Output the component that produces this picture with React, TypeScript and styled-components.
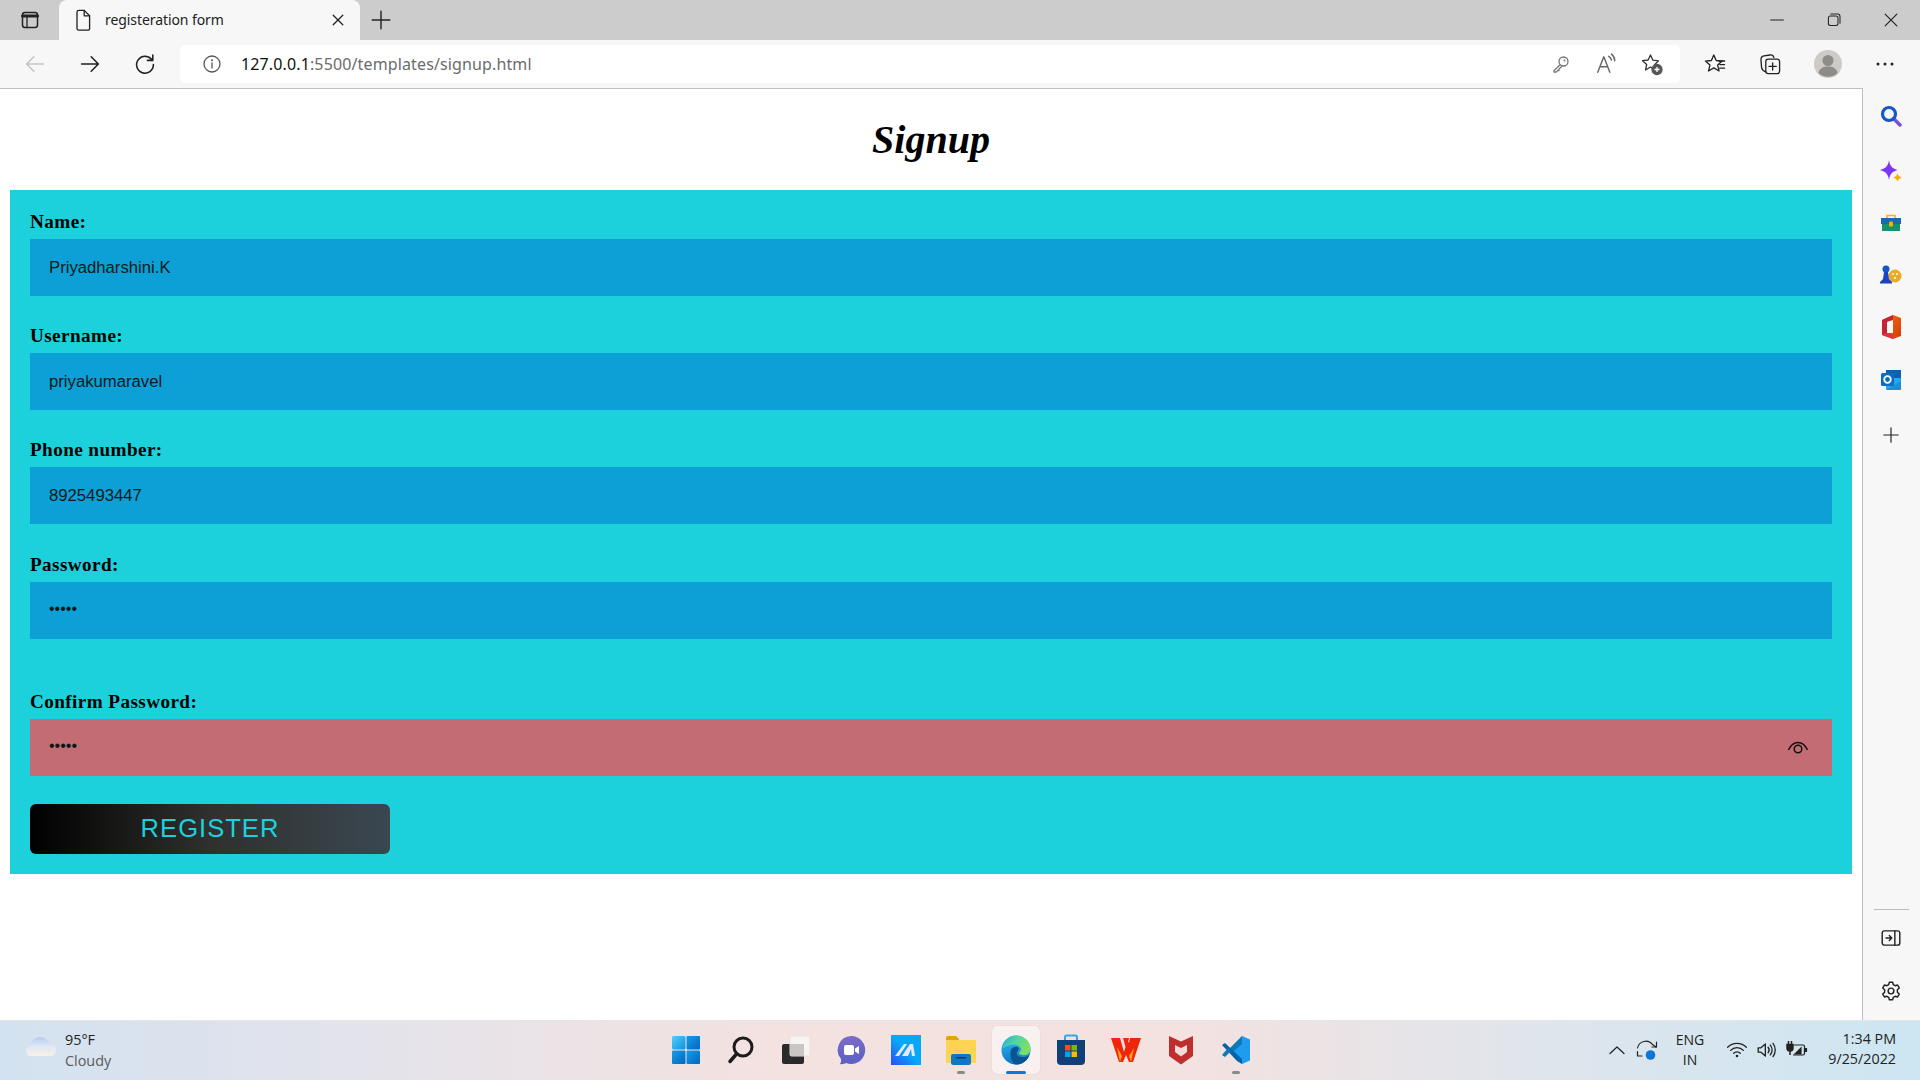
import React from "react";
import styled, { createGlobalStyle } from "styled-components";

const Global = createGlobalStyle`
  html, body { margin: 0; padding: 0; background: #fff; overflow: hidden; }
  * { box-sizing: border-box; }
`;

const uiFont = `"Open Sans", "Noto Sans", sans-serif`;

const Screen = styled.div`
  width: 1920px; height: 1080px; display: flex; flex-direction: column;
  font-family: ${uiFont}; color: #1a1a1a; overflow: hidden;
`;
const TabStrip = styled.div`
  height: 40px; flex: none; background: #cccccc; display: flex; align-items: stretch;
`;
const StripSlot = styled.div<{ $w: number }>`
  width: ${(p) => p.$w}px; flex: none; display: flex; align-items: center; justify-content: center;
`;
const Tab = styled.div`
  width: 301px; flex: none; background: #f7f7f7; border-radius: 8px 8px 0 0;
  display: flex; align-items: center; padding-left: 12px;
`;
const TabTitle = styled.span`
  font-size: 14px; margin-left: 10px; flex: 1; color: #222; font-family: "Noto Sans", sans-serif; letter-spacing: -0.08px; padding-bottom: 2px;
`;
const TabClose = styled.div`
  width: 44px; display: flex; justify-content: center;
`;
const Spacer = styled.div`flex: 1;`;
const Toolbar = styled.div`
  height: 48px; flex: none; background: #f7f7f7; display: flex; align-items: center; padding-left: 7px;
`;
const ToolButton = styled.div<{ $w?: number }>`
  width: ${(p) => p.$w ?? 55}px; height: 38px; flex: none; display: flex; align-items: center; justify-content: center;
`;
const AddressBar = styled.div`
  width: 1500px; height: 38px; flex: none; margin: 0 7px 0 8px; background: #fff; border-radius: 5px;
  display: flex; align-items: center; padding: 0 5px 0 22px;
`;
const Url = styled.div`
  margin-left: 19px; flex: 1; font-size: 16px; color: #6b6b6b; font-family: "Noto Sans", sans-serif; letter-spacing: 0.13px;
`;
const UrlHost = styled.span`color: #111;`;
const Middle = styled.div`flex: 1; display: flex; min-height: 0;`;
const Page = styled.main`
  width: 1863px; flex: none; background: #fff; border-top: 1px solid #bdbdbd; border-right: 1px solid #bdbdbd;
  padding: 0 10px;
`;
const Title = styled.h1`
  height: 101px; margin: 0; display: flex; align-items: center; justify-content: center;
  font: italic bold 40px "Liberation Serif", serif; color: #000;
`;
const Panel = styled.form`
  background: #1cd1dc; padding: 19px 20px 20px; height: 684px;
`;
const Field = styled.div<{ $gap: number }>`
  position: relative; margin-bottom: ${(p) => p.$gap}px;
`;
const Label = styled.label`
  display: block; height: 30px; font: bold 19.2px/25px "Liberation Serif", serif; color: #000; letter-spacing: 0.4px;
`;
const Input = styled.input<{ $bad?: boolean }>`
  display: block; width: 100%; height: 57px; border: none; outline: none;
  padding: ${(p) => (p.type === "password" ? "0 19px 3px" : "0 19px")};
  background: ${(p) => (p.$bad ? "#c46c74" : "#0ca0d6")}; color: #0a1a1a;
  font: ${(p) => (p.type === "password" ? 16 : 16.7)}px "Liberation Sans", Arial, sans-serif;
`;
const Eye = styled.svg`
  position: absolute; right: 22px; bottom: 20px; width: 24px; height: 18px;
`;
const Register = styled.button`
  display: block; width: 360px; height: 50px; border: none; border-radius: 6px; padding: 0 0 2px;
  background: linear-gradient(90deg, #000 0%, #30302e 50%, #3a4750 100%);
  color: #1cd1dc; font: 25.6px "Liberation Sans", Arial, sans-serif; letter-spacing: 1px;
`;
const Sidebar = styled.aside`
  flex: 1; background: #f7f7f7; display: flex; flex-direction: column;
`;
const SideSlot = styled.div<{ $h?: number }>`
  height: ${(p) => p.$h ?? 53}px; flex: none; display: flex; align-items: center; justify-content: center; padding-right: 2px;
`;
const SideRule = styled.div`
  margin: auto 11px 1px 11px; height: 1px; background: #bdbdbd;
`;
const SideEnd = styled.div`height: 3px; flex: none;`;
const Taskbar = styled.footer`
  height: 60px; flex: none; display: grid; grid-template-columns: 1fr auto 1fr; align-items: center;
  background: linear-gradient(90deg, #d3e2f0 0%, #e6e3ea 22%, #f3e2e0 40%, #f3e2e0 62%, #dfe5ec 80%, #cde6f2 100%);
  border-top: 1px solid #e6e6e6; padding-bottom: 1px;
`;
const Weather = styled.div`
  display: flex; align-items: center; padding-left: 25px;
`;
const WeatherIcon = styled.svg`
  margin-top: -6px; flex: none;
`;
const WeatherText = styled.div`
  margin-left: 8px; font-size: 14.4px; line-height: 21px; color: #222;
`;
const Muted = styled.div`color: #5a5a5a;`;
const TaskIcons = styled.div`display: flex; align-items: center; padding-left: 2px;`;
const TaskSlot = styled.div<{ $active?: boolean }>`
  position: relative; width: 55px; height: 48px; display: flex; align-items: center; justify-content: center;
  &::before {
    content: "";
    position: absolute; inset: 0 3.5px;
    border-radius: 5px;
    ${(p) => (p.$active ? "background: #f9f1f0; box-shadow: 0 0 1px rgba(0,0,0,.2);" : "")}
  }
  & > svg { position: relative; }
`;
const RunDot = styled.div<{ $active?: boolean }>`
  position: absolute; bottom: 0; left: 50%; transform: translateX(-50%);
  width: ${(p) => (p.$active ? 20 : 8)}px; height: 3px; border-radius: 2px;
  background: ${(p) => (p.$active ? "#0a78d4" : "#8a8a8a")};
`;
const Tray = styled.div`
  display: flex; align-items: center; justify-content: flex-end; padding-right: 24px;
`;
const TraySlot = styled.div`
  width: 30px; display: flex; justify-content: center; align-items: center;
`;
const Lang = styled.div`
  width: 56px; margin-right: 4px; text-align: center; font-size: 14px; line-height: 20px; color: #222;
`;
const Clock = styled.div`
  width: 84px; text-align: right; font-size: 14.3px; line-height: 20px; color: #222; white-space: nowrap; margin-top: -2px;
`;

type S = { s?: number; children: React.ReactNode; sw?: number; c?: string };
const Ic = ({ s = 20, children, sw = 1.3, c = "#222" }: S) => (
  <svg width={s} height={s} viewBox="0 0 20 20" fill="none" stroke={c} strokeWidth={sw} strokeLinecap="round" strokeLinejoin="round">
    {children}
  </svg>
);
const star = "M9 2.5l2 4.6 5 .5-3.8 3.3 1.2 4.9L9 13.2l-4.4 2.6 1.2-4.9L2 7.6l5-.5z";

const fields = [
  { label: "Name:", value: "Priyadharshini.K", type: "text", gap: 27 },
  { label: "Username:", value: "priyakumaravel", type: "text", gap: 27 },
  { label: "Phone number:", value: "8925493447", type: "text", gap: 28 },
  { label: "Password:", value: "12345", type: "password", gap: 50 },
];

const G = ({ id, stops, x2 = 1, y2 = 1 }: { id: string; stops: string[]; x2?: number; y2?: number }) => (
  <linearGradient id={id} x1="0" y1="0" x2={x2} y2={y2}>
    {stops.map((c, i) => <stop key={c + i} offset={i / (stops.length - 1)} stopColor={c} />)}
  </linearGradient>
);

export default function App() {
  return (
    <Screen>
      <Global />
      <TabStrip>
        <StripSlot $w={59}>
          <Ic s={20}><rect x="2.5" y="2.5" width="15" height="15" rx="2.5" strokeWidth="1.5" /><path d="M2.5 6h15" strokeWidth="3" /><path d="M7 6v11.5" /></Ic>
        </StripSlot>
        <Tab>
          <Ic s={24} sw={1.1}><path d="M5 3.5a1.5 1.5 0 0 1 1.5-1.5H11l4.5 4.5V17a1.5 1.5 0 0 1-1.5 1.5H6.500A1.500 1.500 0 0 1 5 17z" /><path d="M11 2v4.500h4.500" /></Ic>
          <TabTitle>registeration form</TabTitle>
          <TabClose><Ic s={16} sw={1.6}><path d="M4 4l12 12M16 4L4 16" /></Ic></TabClose>
        </Tab>
        <StripSlot $w={42}>
          <Ic s={22}><path d="M10 2v16M2 10h16" /></Ic>
        </StripSlot>
        <Spacer />
        <StripSlot $w={56}><Ic s={18}><path d="M3 10h14" /></Ic></StripSlot>
        <StripSlot $w={57}><Ic s={16}><rect x="3" y="5" width="12" height="12" rx="2.500" /><path d="M6 2.500h8.500A3 3 0 0 1 17.500 5.500V14" /></Ic></StripSlot>
        <StripSlot $w={58}><Ic s={18}><path d="M3.500 3.500l13 13M16.500 3.500l-13 13" /></Ic></StripSlot>
      </TabStrip>
      <Toolbar>
        <ToolButton><Ic s={24} c="#c4c4c4"><path d="M17 10H3M9 4l-6 6 6 6" /></Ic></ToolButton>
        <ToolButton><Ic s={24}><path d="M3 10h14M11 4l6 6-6 6" /></Ic></ToolButton>
        <ToolButton><Ic s={24}><path d="M16 7a7 7 0 1 0 1 3.500" /><path d="M16.500 2.500V7H12" /></Ic></ToolButton>
        <AddressBar>
          <Ic s={20} c="#555"><circle cx="10" cy="10" r="8" /><path d="M10 9v5" /><circle cx="10" cy="6.200" r=".4" /></Ic>
          <Url><UrlHost>127.0.0.1</UrlHost>:5500/templates/signup.html</Url>
          <ToolButton $w={45}><Ic s={20} c="#777"><circle cx="12.500" cy="7.500" r="4.500" /><path d="M9.200 10.800L3 16.500V18h2.500l1-1.500H8v-1.500l2.500-2.200" /><circle cx="13.500" cy="6.500" r=".4" /></Ic></ToolButton>
          <ToolButton $w={46}><Ic s={22} c="#666"><path d="M2.500 17.500L8 3.500l5.500 14M4.500 12.500h7" /><path d="M12.500 3a5 5 0 0 1 2.500 3.500M15 1a8 8 0 0 1 3 6" /></Ic></ToolButton>
          <ToolButton $w={46}>
            <svg width="24" height="24" viewBox="0 0 24 24" fill="none" stroke="#333" strokeWidth="1.300" strokeLinejoin="round">
              <path d="M10.500 3l2.400 5.200 5.600.7-4 3.800 1 3.800-1.500.5-3.500-2-5 3 1.200-5.500-4.200-3.800 5.600-.7z" />
              <circle cx="17" cy="17.500" r="5" fill="#555" stroke="#555" />
              <path d="M17 15v5M14.500 17.500h5" stroke="#fff" />
            </svg>
          </ToolButton>
        </AddressBar>
        <ToolButton $w={55}>
          <Ic s={24} sw={1.1}><path d={star} /><path d="M13 7.500h5M14 10.500h4M14 13.500h4" /></Ic>
        </ToolButton>
        <ToolButton $w={56}>
          <Ic s={24} sw={1.1}><path d="M6.500 16.500c-2-.5-3-1.500-3.500-3.500L2.500 7C2.300 5 3 3.500 5 3.200L10 2.500c1.500-.2 2.800.5 3.200 2" /><rect x="6.500" y="6" width="11.500" height="12" rx="2" /><path d="M12.200 9v6M9.200 12h6" /></Ic>
        </ToolButton>
        <ToolButton $w={60}>
          <svg width="28" height="28" viewBox="0 0 28 28"><circle cx="14" cy="14" r="14" fill="#cdcbc8" /><circle cx="14" cy="10.500" r="5.500" fill="#8f8b87" /><path d="M4.500 23c1-5 5-6.500 9.500-6.500S22.500 18 23.500 23A14 14 0 0 1 4.500 23z" fill="#8f8b87" /></svg>
        </ToolButton>
        <ToolButton $w={54}>
          <svg width="18" height="4" viewBox="0 0 18 4" fill="#222"><circle cx="2" cy="2" r="1.500" /><circle cx="9" cy="2" r="1.500" /><circle cx="16" cy="2" r="1.500" /></svg>
        </ToolButton>
      </Toolbar>
      <Middle>
        <Page>
          <Title>Signup</Title>
          <Panel onSubmit={(e) => e.preventDefault()}>
            {fields.map((f) => (
              <Field key={f.label} $gap={f.gap}>
                <Label>{f.label}</Label>
                <Input type={f.type} defaultValue={f.value} readOnly />
              </Field>
            ))}
            <Field $gap={28}>
              <Label>Confirm Password:</Label>
              <Input type="password" defaultValue="12345" readOnly $bad />
              <Eye viewBox="0 0 24 18" fill="none" stroke="#111" strokeWidth="1.500">
                <path d="M2.500 12C5 6.500 8 4.500 12 4.500S19 6.500 21.500 12" />
                <circle cx="12" cy="11" r="3.800" />
              </Eye>
            </Field>
            <Register type="button">REGISTER</Register>
          </Panel>
        </Page>
        <Sidebar>
          <SideSlot $h={55}>
            <svg width="22" height="22" viewBox="0 0 22 22" fill="none"><path d="M13.500 13.500L20 20" stroke="#7b4fd6" strokeWidth="3.500" strokeLinecap="round" /><circle cx="9" cy="9" r="6.500" stroke="#1658c8" strokeWidth="3.200" /></svg>
          </SideSlot>
          <SideSlot $h={58}>
            <svg width="24" height="24" viewBox="0 0 24 24"><path d="M10 0c.8 5.500 3 8.500 8.500 10-5.500 1.500-7.700 4.500-8.500 10-.8-5.500-3-8.500-9-10C7 8.500 9.200 5.500 10 0z" fill="#7a36f0" /><path d="M18.500 13c.4 2.500 1.400 3.500 4.500 4.500-3.100 1-4.100 2-4.500 4.500-.4-2.500-1.400-3.500-4.500-4.500 3.100-1 4.100-2 4.500-4.500z" fill="#f5b100" /></svg>
          </SideSlot>
          <SideSlot $h={44}>
            <svg width="22" height="20" viewBox="0 0 22 20"><path d="M7 5V2.500h8V5" fill="none" stroke="#eeb32b" strokeWidth="1.600" /><rect x="1" y="5" width="20" height="6" fill="#1668b8" /><rect x="2" y="11" width="18" height="7" fill="#11936f" /><rect x="9" y="8.500" width="4" height="5" rx="1" fill="#f5b100" /></svg>
          </SideSlot>
          <SideSlot $h={60}>
            <svg width="24" height="22" viewBox="0 0 24 22"><circle cx="16" cy="12" r="6.500" fill="#e9ab28" /><circle cx="14" cy="10" r="1" fill="#fff" /><circle cx="18" cy="10" r="1" fill="#fff" /><circle cx="16" cy="14" r="1" fill="#fff" /><circle cx="7" cy="5" r="3.500" fill="#1555c8" /><path d="M5 8h4l1 7 3 3v1.500H1V18l3-3z" fill="#1a44c0" /></svg>
          </SideSlot>
          <SideSlot $h={44}>
            <svg width="22" height="26" viewBox="0 0 22 26"><defs><G id="o1" stops={["#f2700f", "#d93a0a"]} /></defs><path d="M13 1l8 3v18l-8 3-11-4V6z" fill="url(#o1)" /><path d="M13 1L2 6v15l5-2V8l6-2z" fill="#c7243a" /><path d="M7 8l6-2v13l-6 0z" fill="#f7f7f7" /><path d="M2 21l11 4 0-4-6-2z" fill="#d8334a" /></svg>
          </SideSlot>
          <SideSlot $h={62}>
            <svg width="22" height="22" viewBox="0 0 22 22"><rect x="6" y="1" width="15" height="9" fill="#0b62b4" /><rect x="6" y="9" width="15" height="12" rx="1" fill="#28a8ea" /><path d="M6 21l15-9v8a1 1 0 0 1-1 1z" fill="#1490df" /><rect x="1" y="4" width="13" height="13" rx="1.500" fill="#0a6fc4" /><circle cx="7.500" cy="10.500" r="3.300" fill="none" stroke="#fff" strokeWidth="1.800" /></svg>
          </SideSlot>
          <SideSlot $h={48}><Ic s={18}><path d="M10 2v16M2 10h16" /></Ic></SideSlot>
          <SideRule />
          <SideSlot><Ic s={22}><rect x="2" y="3.500" width="16" height="13" rx="2" /><path d="M13.500 3.500v13" /><path d="M5.500 10h5M8.500 7.800l2.200 2.200-2.200 2.200" /></Ic></SideSlot>
          <SideSlot>
            <Ic s={22}><path d="M8.500 2h3l.6 2.300 1.600.9 2.300-.6 1.500 2.600-1.700 1.700v2.200l1.700 1.700-1.500 2.600-2.300-.6-1.600.9-.6 2.300h-3l-.6-2.300-1.600-.9-2.300.6-1.500-2.600 1.700-1.700V8.900L2.500 7.200 4 4.600l2.300.6 1.600-.9z" /><circle cx="10" cy="10" r="2.600" /></Ic>
          </SideSlot>
          <SideEnd />
        </Sidebar>
      </Middle>
      <Taskbar>
        <Weather>
          <WeatherIcon width="32" height="22" viewBox="0 0 32 22">
            <defs><G id="cl" stops={["#b4cbf2", "#dfe8f6", "#f6f1e4"]} x2={0} /></defs>
            <path d="M6 20a5 5 0 0 1-2-9.600C6 4.500 10 1 15.500 1c4.500 0 7.500 3 8.500 6.500a6.300 6.300 0 0 1 2 12.500z" fill="url(#cl)" />
          </WeatherIcon>
          <WeatherText>95°F<Muted>Cloudy</Muted></WeatherText>
        </Weather>
        <TaskIcons>
          <TaskSlot>
            <svg width="30" height="30" viewBox="0 0 30 30">
              <defs><G id="w1" stops={["#52cffa", "#0f8fe0"]} /><G id="w2" stops={["#1a9ce6", "#0067c0"]} /></defs>
              <rect x="1" y="1" width="13.500" height="13.500" rx="1.500" fill="url(#w1)" /><rect x="15.500" y="1" width="13.500" height="13.500" rx="1" fill="url(#w2)" /><rect x="1" y="15.500" width="13.500" height="13.500" rx="1" fill="url(#w2)" /><rect x="15.500" y="15.500" width="13.500" height="13.500" rx="1" fill="url(#w2)" />
            </svg>
          </TaskSlot>
          <TaskSlot>
            <svg width="30" height="30" viewBox="0 0 30 30" fill="none" stroke="#1c1c1c"><circle cx="17" cy="12" r="9" strokeWidth="3" /><path d="M10.500 19L4 26.500" strokeWidth="3.500" strokeLinecap="round" /></svg>
          </TaskSlot>
          <TaskSlot>
            <svg width="30" height="30" viewBox="0 0 30 30"><rect x="1" y="9" width="22" height="20" rx="2" fill="#2a2a2a" /><rect x="9" y="1" width="20" height="20" rx="1.500" fill="#f7f7f7" fillOpacity=".85" stroke="#e6e0df" /><rect x="9" y="9" width="14" height="12" fill="#c9c6c5" /></svg>
          </TaskSlot>
          <TaskSlot>
            <svg width="30" height="30" viewBox="0 0 30 30"><defs><G id="ch" stops={["#7b6bc8", "#5b5fc7"]} x2={0} /></defs><path d="M15 1a14 14 0 1 1-5 27c-1.500 1-4 1.500-6 1 1-1.500 1.500-3.500 1-5A14 14 0 0 1 15 1z" fill="url(#ch)" /><rect x="8" y="10" width="10" height="10" rx="2" fill="#fff" /><path d="M19 13.500l4-2.500v8l-4-2.500z" fill="#fff" /></svg>
          </TaskSlot>
          <TaskSlot>
            <svg width="30" height="30" viewBox="0 0 30 30"><defs><G id="mm" stops={["#08a8f8", "#2b4cf2", "#5a20e8"]} x2={-1} /></defs><rect width="30" height="30" fill="url(#mm)" /><path d="M4 21L13 9h3L8 21zM11 21l8-12h3l2 12h-3l-1-7-3 7z" fill="#e8e8ff" /></svg>
          </TaskSlot>
          <TaskSlot>
            <svg width="32" height="30" viewBox="0 0 32 30"><path d="M1 3a2 2 0 0 1 2-2h8l3 3v6H1z" fill="#e2a40c" /><path d="M1 5h30v22a1 1 0 0 1-1 1H2a1 1 0 0 1-1-1z" fill="#ffd452" /><rect x="6" y="19" width="20" height="11" rx="2" fill="#1077c4" /><rect x="11" y="22" width="10" height="1.500" fill="#0b3d6b" /></svg>
            <RunDot />
          </TaskSlot>
          <TaskSlot $active>
            <svg width="30" height="30" viewBox="0 0 32 32">
              <defs><G id="e1" stops={["#35c1f1", "#0c72c4"]} x2={0} /><G id="e2" stops={["#1fa5e0", "#52d6a0", "#7ee05f"]} x2={1} y2={0.5} /></defs>
              <circle cx="16" cy="16" r="15.500" fill="url(#e1)" />
              <path d="M1.500 14C3 6 9 .5 16 .5c8.500 0 15.500 6 15.500 14.500 0 4-3 6.500-7 6.500-3 0-5.500-1-5.500-2.500 2-1 3-3 2-5-2-4-8-5-12-3-3 1-7 4-8.500 3z" fill="url(#e2)" />
              <path d="M10 19c0-4.500 3-7 7-6.500 2.500.5 2.500 3 .5 5-2 2.500.5 6 6 6 3 0 5-1 6.500-2-2 6-7.500 10-14 10-1 0-2-1-3-2-2-3-3-6-3-10.500z" fill="#0b558f" />
            </svg>
            <RunDot $active />
          </TaskSlot>
          <TaskSlot>
            <svg width="30" height="32" viewBox="0 0 30 32"><path d="M9 6V3a1.500 1.500 0 0 1 1.500-1.500h9A1.500 1.500 0 0 1 21 3v3" fill="none" stroke="#2ea8e6" strokeWidth="2" /><path d="M1 6h28v21a4 4 0 0 1-4 4H5a4 4 0 0 1-4-4z" fill="#123f78" /><rect x="9" y="11" width="5.500" height="5.500" fill="#f05022" /><rect x="15.500" y="11" width="5.500" height="5.500" fill="#7eb900" /><rect x="9" y="17.500" width="5.500" height="5.500" fill="#00a3ee" /><rect x="15.500" y="17.500" width="5.500" height="5.500" fill="#ffb900" /></svg>
          </TaskSlot>
          <TaskSlot>
            <svg width="30" height="26" viewBox="0 0 30 26"><path d="M0 1h9l4 14 1.500-5L12 1h6l-1 4 1 .5L19 1h11l-8 24h-4l-3-7-3 7H8z" fill="#f0260c" /><path d="M9 25L6 10l5 9zM20 25l3-14-5 8z" fill="#ffa21a" /></svg>
          </TaskSlot>
          <TaskSlot>
            <svg width="28" height="30" viewBox="0 0 28 30"><path d="M2 1l12 5.500L26 1v20l-12 8.500L2 21z" fill="#bf2f2d" /><path d="M8 10l6 3 6-3v7l-6 4.500-6-4.500z" fill="#f3dcd8" /></svg>
          </TaskSlot>
          <TaskSlot>
            <svg width="30" height="30" viewBox="0 0 30 30"><path d="M21 1l8 3.500v21L21 29 9 17z" fill="#1f9cf0" /><path d="M21 1L8 14l4 3L21 9z" fill="#0f78b8" /><path d="M1 10l3-2 17 16v5l-5-3z" fill="#0065a9" /><path d="M1 20l3 2 6-6-3-3z" fill="#1177bb" /></svg>
            <RunDot />
          </TaskSlot>
        </TaskIcons>
        <Tray>
          <TraySlot><Ic s={20} sw={1.2}><path d="M3 13.500l7-6.500 7 6.500" /></Ic></TraySlot>
          <TraySlot>
            <svg width="22" height="22" viewBox="0 0 22 22" fill="none" stroke="#222" strokeWidth="1.200" strokeLinecap="round" strokeLinejoin="round"><path d="M1.500 9a8.500 8.500 0 0 1 15-3.500L20 8" /><path d="M20.500 3v5h-4.500" /><path d="M6 17H1.500M1.500 12.500V17l3 0" /><circle cx="14.500" cy="16" r="4.800" fill="#0a78d4" stroke="none" /></svg>
          </TraySlot>
          <Lang>ENG<br />IN</Lang>
          <TraySlot><Ic s={22} sw={1.2}><path d="M1.500 7.500a12 12 0 0 1 17 0M4.200 10.300a8 8 0 0 1 11.600 0M7 13a4 4 0 0 1 6 0" /><circle cx="10" cy="15.500" r=".6" fill="#222" /></Ic></TraySlot>
          <TraySlot><Ic s={22} sw={1.200}><path d="M2 8v4h2.500l4 3.500v-11l-4 3.500zM11 7.500a4 4 0 0 1 0 5M13 5.500a7 7 0 0 1 0 9M15.500 4a10 10 0 0 1 0 12" /></Ic></TraySlot>
          <TraySlot>
            <svg width="22" height="22" viewBox="0 0 22 22" fill="none" stroke="#222" strokeWidth="1.200"><path d="M8 6h9a1.500 1.500 0 0 1 1.500 1.500v7A1.500 1.500 0 0 1 17 16H7" /><path d="M18.500 9.500h2v3h-2z" fill="#222" /><path d="M9 15l6-6v6z" fill="#222" /><path d="M1 5.500h6v3.500a3 3 0 0 1-6 0zM2.500 2v3.500M5.500 2v3.500M4 12v4" fill="#222" strokeWidth="1.500" /></svg>
          </TraySlot>
          <Clock>1:34 PM<br />9/25/2022</Clock>
        </Tray>
      </Taskbar>
    </Screen>
  );
}
